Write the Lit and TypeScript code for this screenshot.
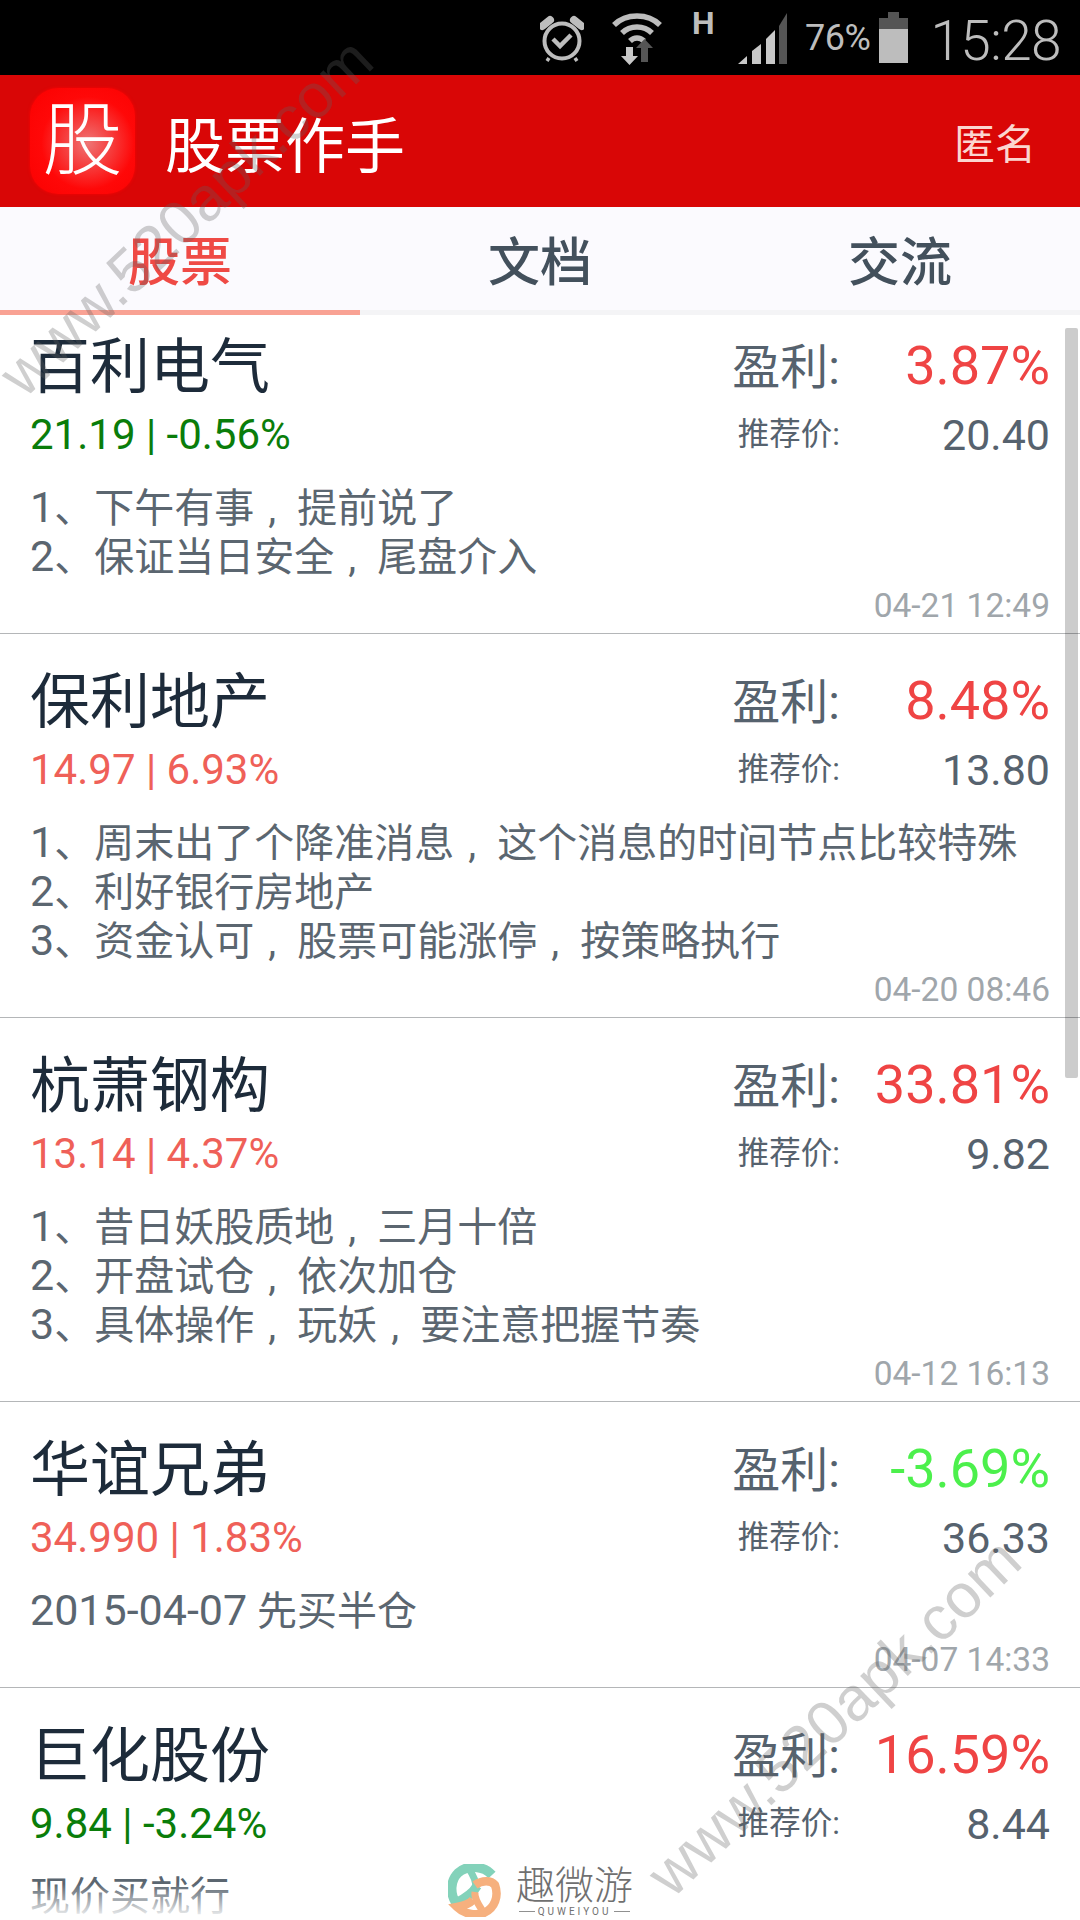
import { LitElement, html, css, svg } from "lit";
import { customElement } from "lit/decorators.js";

interface Stock {
  name: string; quote: string; up: boolean; profit: string; gain: boolean;
  price: string; lines: string[]; date: string;
}

const STOCKS: Stock[] = [
  { name: "百利电气", quote: "21.19 | -0.56%", up: false, profit: "3.87%", gain: true, price: "20.40",
    lines: ["1、下午有事,提前说了", "2、保证当日安全,尾盘介入"], date: "04-21 12:49" },
  { name: "保利地产", quote: "14.97 | 6.93%", up: true, profit: "8.48%", gain: true, price: "13.80",
    lines: ["1、周末出了个降准消息,这个消息的时间节点比较特殊", "2、利好银行房地产", "3、资金认可,股票可能涨停,按策略执行"], date: "04-20 08:46" },
  { name: "杭萧钢构", quote: "13.14 | 4.37%", up: true, profit: "33.81%", gain: true, price: "9.82",
    lines: ["1、昔日妖股质地,三月十倍", "2、开盘试仓,依次加仓", "3、具体操作,玩妖,要注意把握节奏"], date: "04-12 16:13" },
  { name: "华谊兄弟", quote: "34.990 | 1.83%", up: true, profit: "-3.69%", gain: false, price: "36.33",
    lines: ["2015-04-07 先买半仓"], date: "04-07 14:33" },
  { name: "巨化股份", quote: "9.84 | -3.24%", up: false, profit: "16.59%", gain: true, price: "8.44",
    lines: ["现价买就行"], date: "" },
];

@customElement("app-root")
export class AppRoot extends LitElement {
  static styles = css`
    :host {
      display: block; position: relative; width: 1080px; height: 1920px; overflow: hidden;
      background: #fff; font-family: Roboto, "Noto Sans CJK SC", sans-serif;
    }
    .status {
      height: 75px; box-sizing: border-box; background: #000; color: #bdbdbd;
      display: flex; align-items: center; justify-content: flex-end; padding-right: 19px;
    }
    .status svg { display: block; flex: none; }
    .alarm { margin-right: 28px; }
    .wifi { margin-right: 30px; }
    .h { font: 700 32px/1 Roboto, sans-serif; margin: -30px 24px 0 0; width: 22px; }
    .signal { margin-right: 18px; }
    .pct { font-size: 36px; margin-right: 9px; letter-spacing: -0.5px; }
    .battery { margin-right: 22px; }
    .time { font-size: 55px; font-weight: 300; margin-top: 6px; letter-spacing: -0.6px; }

    .bar {
      height: 132px; background: #d90606; display: flex; align-items: center;
      padding: 0 44px 0 30px; color: #fff;
    }
    .icon {
      width: 105px; height: 106px; border-radius: 28px; flex: none; margin-right: 30px;
      background: radial-gradient(circle at 55% 52%, #ee7676 0%, #f54444 26%, #ff0808 58%, #fb0000 100%);
      box-shadow: 0 0 3px #f00;
      display: flex; align-items: center; justify-content: center;
      font-size: 80px; font-weight: 300; line-height: 1; color: #fff;
    }
    .bar-title { font-size: 60px; flex: 1; }
    .anon { font-size: 41px; color: #fbd6d0; }

    .tabs { display: flex; background: #fbfafe; height: 103px; }
    .tab {
      flex: 1; display: flex; align-items: center; justify-content: center;
      font-size: 52px; font-weight: 500; color: #43505c;
    }
    .tab.on { color: #ef4a45; }
    .track { height: 5px; background: #f4f4f6; }
    .mark { width: 360px; height: 5px; background: #f9a294; }

    .card {
      display: grid; grid-template-columns: 1fr auto 210px;
      padding: 34px 30px 2px 30px; border-bottom: 1px solid #b4b6b8;
    }
    .card:first-child { padding-top: 18px; }
    .name { font-size: 60px; line-height: 70px; color: #1d2b3a; }
    .label { font-size: 48px; line-height: 70px; color: #56626e; text-align: right; }
    .profit { font-size: 54px; line-height: 66px; text-align: right; }
    .gain { color: #ef4444; }
    .loss { color: #4cf04c; }
    .quote { font-size: 42px; line-height: 64px; }
    .up { color: #ef6058; }
    .down { color: #0a7d0a; }
    .sub { font-size: 31.5px; line-height: 64px; color: #56626e; text-align: right; }
    .price { font-size: 43px; line-height: 64px; color: #56626e; text-align: right; }
    .body { grid-column: 1 / -1; margin-top: 16px; font-size: 40px; line-height: 49px; color: #5b6670; }
    .body > div { height: 49px; white-space: nowrap; }
    .num { font-size: 43px; }
    .cm { display: inline-block; width: 43px; text-indent: 14px; }
    .date { grid-column: 1 / -1; height: 50px; font-size: 33.5px; line-height: 50px; color: #a0a6ab; text-align: right; }

    .scroll {
      position: absolute; left: 1065px; top: 328px; width: 13px; height: 750px;
      border-radius: 2px; background: rgba(0, 0, 0, 0.2);
    }
    .wm {
      position: absolute; font: 400 62px/1 "Liberation Sans", sans-serif; color: rgba(95, 95, 95, 0.3);
      white-space: nowrap; transform: translate(-50%, -50%) rotate(-43.5deg); pointer-events: none;
    }
    .wm-a { left: 186px; top: 217px; }
    .wm-b { left: 834px; top: 1717px; }

    .fade {
      position: absolute; left: 0; right: 0; bottom: 0; height: 36px;
      background: linear-gradient(rgba(255,255,255,0), #fff);
    }
    .brand {
      position: absolute; left: 448px; top: 1864px; display: flex; align-items: center; gap: 15px;
    }
    .brand-text { display: flex; flex-direction: column; align-items: center; color: #707070; }
    .brand-cn { font-size: 39px; line-height: 42px; font-weight: 300; }
    .brand-en { font-size: 10px; line-height: 10px; letter-spacing: 3px; display: flex; align-items: center; gap: 3px; }
    .brand-en i { display: block; width: 16px; height: 1px; background: #909090; }
  `;

  private statusIcons() {
    return html`
      <svg class="alarm" width="44" height="48" viewBox="0 0 44 48" fill="none" stroke="#bdbdbd">
        <circle cx="22" cy="27" r="17.5" stroke-width="4"/>
        <path d="M13 25 L20 32 L31 21" stroke-width="4.5"/>
        <path d="M2.500 12 L10 6 M41.500 12 L34 6" stroke-width="8" stroke-linecap="round"/>
        <path d="M9 44 L7 47 M35 44 L37 47" stroke-width="3.5"/>
      </svg>
      <svg class="wifi" width="50" height="56" viewBox="0 0 50 56" fill="none">
        <g stroke="#bdbdbd" stroke-width="5.5">
          <path d="M2 15 C14 3 36 3 48 15"/>
          <path d="M10 23 C18 15 32 15 40 23"/>
          <path d="M18 31 C22 27 28 27 32 31"/>
        </g>
        <path d="M14 37 h7 v9 h5 l-8.500 9 l-8.500 -9 h5 z" fill="#c8c8c8"/>
        <path d="M29 52 v-14 h-5 l8.500 -9 l8.500 9 h-5 v14 z" fill="#555"/>
      </svg>
      <span class="h">H</span>
      <svg class="signal" width="49" height="52" viewBox="0 0 49 52">
        <path d="M0 52 L9 44 V52 Z" fill="#c8c8c8"/>
        <path d="M14 39 L23 32 V52 H14 Z" fill="#c8c8c8"/>
        <path d="M28 27 L37 18 V52 H28 Z" fill="#c8c8c8"/>
        <path d="M41 14 L49 1 V52 H41 Z" fill="#555"/>
      </svg>
      <span class="pct">76%</span>
      <svg class="battery" width="29" height="51" viewBox="0 0 29 51">
        <path d="M9 0 h11 v6 h9 v11 h-29 v-11 h9 z" fill="#555"/>
        <rect x="0" y="17" width="29" height="34" fill="#bdbdbd"/>
      </svg>
      <span class="time">15:28</span>
    `;
  }

  private brandMark() {
    return svg`
      <path d="M44 11 C36 2 20 0 10 9 C2 17 2 30 8 39 C14 36 24 31 29 22" fill="none" stroke="#83d2ba" stroke-width="9.500"/>
      <path d="M21 5 C26 12 28 18 28 24" fill="none" stroke="#83d2ba" stroke-width="7"/>
      <path d="M27 21 C34 16 43 16 47 21 C51 32 47 44 36 49 C27 52 16 50 9 43 C15 42 22 39 25 36" fill="none" stroke="#f6b07e" stroke-width="8.500"/>
      <path d="M27 28 C26 34 30 40 34 46" fill="none" stroke="#f6b07e" stroke-width="7"/>
    `;
  }

  /** Latin runs are set larger than the CJK text, and the full-width comma gets a centred slot. */
  private line(text: string) {
    return text.split(/([0-9-]+|,)/).filter(Boolean).map((part) => {
      if (part === ",") return html`<span class="cm">,</span>`;
      if (/^[0-9-]+$/.test(part)) return html`<span class="num">${part}</span>`;
      return part;
    });
  }

  render() {
    return html`
      <div class="status">${this.statusIcons()}</div>
      <div class="bar">
        <div class="icon">股</div>
        <div class="bar-title">股票作手</div>
        <div class="anon">匿名</div>
      </div>
      <div class="tabs">
        <div class="tab on">股票</div>
        <div class="tab">文档</div>
        <div class="tab">交流</div>
      </div>
      <div class="track"><div class="mark"></div></div>
      <div class="list">
        ${STOCKS.map((s) => html`
          <div class="card">
            <div class="name">${s.name}</div>
            <div class="label">盈利:</div>
            <div class="profit ${s.gain ? "gain" : "loss"}">${s.profit}</div>
            <div class="quote ${s.up ? "up" : "down"}">${s.quote}</div>
            <div class="sub">推荐价:</div>
            <div class="price">${s.price}</div>
            <div class="body">${s.lines.map((l) => html`<div>${this.line(l)}</div>`)}</div>
            <div class="date">${s.date}</div>
          </div>
        `)}
      </div>
      <div class="scroll"></div>
      <div class="fade"></div>
      <div class="wm wm-a">www.520apk.com</div>
      <div class="wm wm-b">www.520apk.com</div>
      <div class="brand">
        <svg width="53" height="53" viewBox="0 0 53 53">${this.brandMark()}</svg>
        <div class="brand-text">
          <div class="brand-cn">趣微游</div>
          <div class="brand-en"><i></i>QUWEIYOU<i></i></div>
        </div>
      </div>
    `;
  }
}
